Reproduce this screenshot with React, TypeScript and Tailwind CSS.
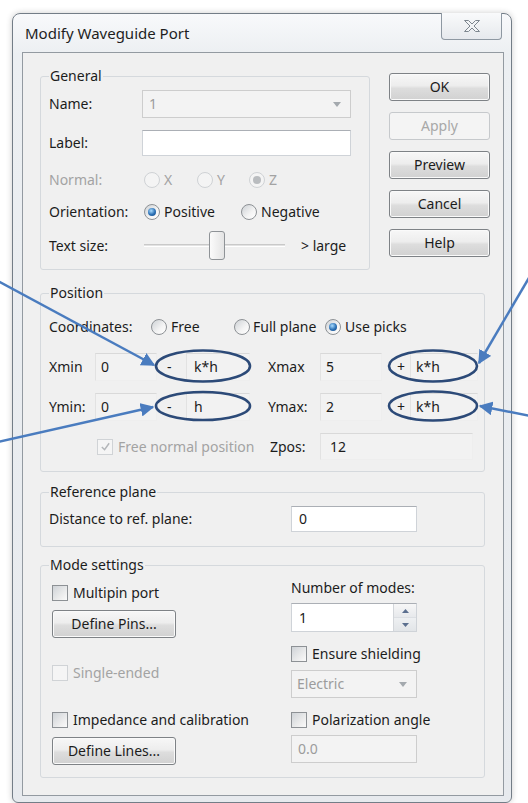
import type { ReactNode } from "react";

type Toggle = { checked?: boolean; disabled?: boolean };

function Radio({ checked, disabled }: Toggle) {
  return (
    <span
      className={`flex h-[16px] w-[16px] shrink-0 items-center justify-center rounded-full border ${
        disabled
          ? "border-[#cfd2d5] bg-[#f4f4f4]"
          : "border-[#8d9195] bg-[linear-gradient(135deg,#cdd1d5,#f4f4f4_60%,#ffffff)]"
      }`}
    >
      {checked && (
        <span
          className={`h-[8px] w-[8px] rounded-full ${
            disabled
              ? "bg-[#b9bcbf]"
              : "bg-[radial-gradient(circle_at_40%_35%,#a9dcff,#2a6fb4_55%,#174a86)]"
          }`}
        />
      )}
    </span>
  );
}

function Check({ checked, disabled }: Toggle) {
  return (
    <span
      className={`flex h-[16px] w-[16px] shrink-0 items-center justify-center border ${
        disabled
          ? "border-[#d0d3d6] bg-[#f5f5f5]"
          : "border-[#8d9195] bg-[linear-gradient(135deg,#cfd3d7,#efefef_70%,#fafafa)]"
      }`}
    >
      {checked && (
        <svg viewBox="0 0 12 12" className="h-[11px] w-[11px]">
          <path d="M2 6.5 L5 9.5 L10 2.5" fill="none" stroke="#b3b6b9" strokeWidth="1.6" />
        </svg>
      )}
    </span>
  );
}

function Button({ children, disabled, className = "" }: { children: ReactNode; disabled?: boolean; className?: string }) {
  return (
    <button
      type="button"
      className={`flex h-[28px] items-center justify-center rounded-[3px] border ${
        disabled
          ? "border-[#c6c9cc] bg-[#f4f4f4] text-[#a8a8a8]"
          : "border-[#7e8286] bg-[linear-gradient(#f7f7f7,#ededed_45%,#dddddd_55%,#d1d1d1)] text-[#1c1c1c] shadow-[inset_0_0_0_1px_#fafafa]"
      } ${className}`}
    >
      {children}
    </button>
  );
}

const fieldKinds = {
  edit: "border-[#cfd3d8] border-t-[#abafb5] bg-white text-[#1c1c1c]",
  flat: "border-[#eeeeee] border-t-[#d9d9d9] border-l-[#e2e2e2] bg-[#f2f2f2] text-[#1c1c1c]",
  off: "border-[#cdcdcd] bg-[#f3f3f3] text-[#9c9c9c]",
};

function Field({
  value = "",
  kind = "edit",
  className = "",
  children,
}: {
  value?: string;
  kind?: keyof typeof fieldKinds;
  className?: string;
  children?: ReactNode;
}) {
  return (
    <div className={`flex items-center justify-between border ${fieldKinds[kind]} ${className}`}>
      <span>{value}</span>
      {children}
    </div>
  );
}

const DropArrow = () => (
  <svg viewBox="0 0 8 5" className="mr-[9px] h-[5px] w-[8px]">
    <path d="M0 0 H8 L4 5 Z" fill="#a4a9ae" />
  </svg>
);

function Group({ title, className = "", children }: { title: string; className?: string; children: ReactNode }) {
  return (
    <fieldset className={`rounded-[3px] border border-[#d5d9dd] ${className}`}>
      <legend className="ml-[8px] px-[1px] leading-[16px] text-[#1c1c1c]">{title}</legend>
      {children}
    </fieldset>
  );
}

function Labeled({ children, disabled }: { children: ReactNode; disabled?: boolean }) {
  return <span className={disabled ? "text-[#a3a3a3]" : "text-[#1c1c1c]"}>{children}</span>;
}

// one "Xmin ... - k*h   Xmax ... + k*h" line of the Position box
function RangeRow({ lo, loVal, loExtra, hi, hiVal, hiExtra }: { lo: string; loVal: string; loExtra: string; hi: string; hiVal: string; hiExtra: string }) {
  return (
    <div className="flex h-[28px] items-center">
      <span className="w-[46px]">{lo}</span>
      <Field kind="flat" value={loVal} className="h-[28px] w-[62px] pl-[5px]" />
      <span className="w-[29px] pl-[10px]">-</span>
      <Field kind="flat" value={loExtra} className="h-[28px] w-[64px] pl-[7px]" />
      <span className="ml-[18px] w-[52px]">{hi}</span>
      <Field kind="flat" value={hiVal} className="h-[28px] w-[62px] pl-[5px]" />
      <span className="w-[28px] pl-[15px]">+</span>
      <Field kind="flat" value={hiExtra} className="h-[28px] w-[68px] pl-[5px]" />
    </div>
  );
}

function Annotations() {
  const blue = "#4a7cbf";
  const navy = "#2c4a78";
  return (
    <svg className="pointer-events-none absolute left-0 top-0" width="528" height="803" viewBox="0 0 528 803">
      <defs>
        <marker id="head" viewBox="0 0 10 10" refX="9" refY="5" markerWidth="5.5" markerHeight="5.5" orient="auto">
          <path d="M0 0 L10 5 L0 10 Z" fill={blue} />
        </marker>
      </defs>
      <g fill="none" stroke={blue} strokeWidth="2.5" markerEnd="url(#head)">
        <line x1="-2" y1="281" x2="154" y2="365" />
        <line x1="-2" y1="442" x2="153" y2="407" />
        <line x1="530" y1="276" x2="479" y2="363" />
        <line x1="530" y1="416" x2="480" y2="406" />
      </g>
      <g fill="none" stroke={navy} strokeWidth="2.6">
        <ellipse cx="203" cy="366" rx="47" ry="15.5" />
        <ellipse cx="433" cy="366" rx="44" ry="15.5" />
        <ellipse cx="203" cy="406" rx="47" ry="14" />
        <ellipse cx="433" cy="406" rx="44" ry="14.5" />
      </g>
    </svg>
  );
}

export default function App() {
  return (
    <div className="relative h-[803px] w-[528px] overflow-hidden bg-white font-['Noto_Sans',sans-serif] text-[14px] leading-[18px] text-[#1c1c1c]">
      {/* window frame */}
      <div className="ml-[12px] mt-[13px] flex h-[790px] w-[500px] flex-col rounded-t-[8px] rounded-b-[6px] border border-[#737d87] bg-[linear-gradient(180deg,#f8f9fb,#eceff2_40px,#e7eaee)] pb-[6px] pl-[9px] pr-[7px] shadow-[0_0_6px_rgba(0,0,0,0.2)]">
        <div className="flex h-[38px] shrink-0 items-start justify-between">
          <span className="mt-[10px] pl-[3px] text-[15px] text-[#1e1e1e]">Modify Waveguide Port</span>
          <div className="-mt-[1px] mr-[2px] flex h-[27px] w-[61px] items-center justify-center rounded-b-[4px] border border-t-0 border-[#8e98a2] bg-[linear-gradient(#f9fafb,#e6e9ed)]">
            <svg viewBox="0 0 18 14" className="h-[14px] w-[18px]">
              <path
                d="M1.5 1.5 H5.5 L9 5 L12.5 1.5 H16.5 L11 7 L16.5 12.5 H12.5 L9 9 L5.5 12.5 H1.5 L7 7 Z"
                fill="#f2f4f6"
                stroke="#7d868f"
                strokeWidth="1"
                strokeLinejoin="round"
              />
            </svg>
          </div>
        </div>

        {/* client area */}
        <div className="flex flex-1 flex-col border border-[#939aa1] bg-[#f0f0f0] pl-[17px] pt-[15px]">
          <div className="flex">
            <Group title="General" className="h-[202px] w-[330px]">
              <div className="flex flex-col pl-[8px]">
                <div className="mt-[6px] flex h-[28px] items-center">
                  <span className="w-[93px]">Name:</span>
                  <Field kind="off" value="1" className="h-[28px] w-[209px] pl-[6px] text-[#8e8e8e]">
                    <DropArrow />
                  </Field>
                </div>
                <div className="mt-[12px] flex h-[26px] items-center">
                  <span className="w-[93px]">Label:</span>
                  <Field kind="edit" className="h-[26px] w-[209px]" />
                </div>
                <div className="mt-[12px] flex h-[24px] items-center text-[#a3a3a3]">
                  <span className="w-[95px]">Normal:</span>
                  <div className="flex w-[53px] items-center gap-[4px]">
                    <Radio disabled />
                    <span>X</span>
                  </div>
                  <div className="flex w-[52px] items-center gap-[4px]">
                    <Radio disabled />
                    <span>Y</span>
                  </div>
                  <div className="flex items-center gap-[4px]">
                    <Radio checked disabled />
                    <span>Z</span>
                  </div>
                </div>
                <div className="mt-[8px] flex h-[24px] items-center">
                  <span className="w-[95px]">Orientation:</span>
                  <div className="flex w-[97px] items-center gap-[4px]">
                    <Radio checked />
                    <span>Positive</span>
                  </div>
                  <div className="flex items-center gap-[4px]">
                    <Radio />
                    <span>Negative</span>
                  </div>
                </div>
                <div className="mt-[7px] flex h-[29px] items-center">
                  <span className="w-[95px]">Text size:</span>
                  <div className="flex w-[141px] items-center">
                    <div className="h-[3px] w-[65px] border-y border-t-[#c9c9c9] border-b-white bg-[#e2e2e2]" />
                    <div className="h-[29px] w-[16px] rounded-[3px] border border-[#8f9397] bg-[linear-gradient(90deg,#fbfbfb,#e4e4e4)]" />
                    <div className="h-[3px] flex-1 border-y border-t-[#c9c9c9] border-b-white bg-[#e2e2e2]" />
                  </div>
                  <span className="ml-[16px]">&gt; large</span>
                </div>
              </div>
            </Group>

            <div className="ml-[19px] mt-[5px] flex w-[101px] flex-col gap-[11px]">
              <Button className="shadow-[inset_0_0_0_1px_#e9eef3]">OK</Button>
              <Button disabled>Apply</Button>
              <Button>Preview</Button>
              <Button>Cancel</Button>
              <Button>Help</Button>
            </div>
          </div>

          <Group title="Position" className="mt-[15px] h-[187px] w-[445px]">
            <div className="flex flex-col pl-[8px]">
              <div className="mt-[14px] flex h-[24px] items-center">
                <span className="w-[102px]">Coordinates:</span>
                <div className="flex w-[83px] items-center gap-[4px]">
                  <Radio />
                  <span>Free</span>
                </div>
                <div className="flex w-[91px] items-center gap-[3px]">
                  <Radio />
                  <span>Full plane</span>
                </div>
                <div className="flex items-center gap-[4px]">
                  <Radio checked />
                  <span>Use picks</span>
                </div>
              </div>
              <div className="mt-[14px]">
                <RangeRow lo="Xmin" loVal="0" loExtra="k*h" hi="Xmax" hiVal="5" hiExtra="k*h" />
              </div>
              <div className="mt-[12px]">
                <RangeRow lo="Ymin:" loVal="0" loExtra="h" hi="Ymax:" hiVal="2" hiExtra="k*h" />
              </div>
              <div className="-ml-[8px] mt-[12px] flex h-[27px] items-center">
                <div className="flex w-[229px] items-center gap-[5px] pl-[56px]">
                  <Check checked disabled />
                  <Labeled disabled>Free normal position</Labeled>
                </div>
                <span className="w-[50px]">Zpos:</span>
                <Field kind="flat" value="12" className="h-[27px] w-[153px] pl-[9px]" />
              </div>
            </div>
          </Group>

          <Group title="Reference plane" className="mt-[12px] h-[63px] w-[445px]">
            <div className="mt-[6px] flex h-[26px] items-center pl-[8px]">
              <span className="w-[242px]">Distance to ref. plane:</span>
              <Field kind="edit" value="0" className="h-[26px] w-[126px] pl-[7px]" />
            </div>
          </Group>

          <Group title="Mode settings" className="mt-[10px] h-[221px] w-[445px]">
            <div className="flex pl-[11px]">
              <div className="flex w-[239px] flex-col items-start">
                <div className="mt-[11px] flex h-[17px] items-center gap-[5px]">
                  <Check />
                  <Labeled>Multipin port</Labeled>
                </div>
                <Button className="mt-[9px] w-[124px]">Define Pins...</Button>
                <div className="mt-[26px] flex h-[17px] items-center gap-[5px]">
                  <Check disabled />
                  <Labeled disabled>Single-ended</Labeled>
                </div>
                <div className="mt-[30px] flex h-[17px] items-center gap-[5px]">
                  <Check />
                  <Labeled>Impedance and calibration</Labeled>
                </div>
                <Button className="mt-[9px] w-[124px]">Define Lines...</Button>
              </div>
              <div className="flex flex-col items-start">
                <span className="mt-[6px]">Number of modes:</span>
                <Field kind="edit" value="1" className="mt-[6px] h-[29px] w-[126px] pl-[7px]">
                  <div className="flex h-full w-[23px] flex-col border-l border-[#d3d6da]">
                    <div className="flex flex-1 items-center justify-center border-b border-[#dcdfe3] bg-[linear-gradient(#f7f7f7,#e7e9ec)]">
                      <svg viewBox="0 0 7 4" className="h-[4px] w-[7px]">
                        <path d="M0 4 L3.5 0 L7 4 Z" fill="#5b6f8f" />
                      </svg>
                    </div>
                    <div className="flex flex-1 items-center justify-center bg-[linear-gradient(#eef0f2,#e2e5e8)]">
                      <svg viewBox="0 0 7 4" className="h-[4px] w-[7px]">
                        <path d="M0 0 H7 L3.5 4 Z" fill="#5b6f8f" />
                      </svg>
                    </div>
                  </div>
                </Field>
                <div className="mt-[13px] flex h-[17px] items-center gap-[5px]">
                  <Check />
                  <Labeled>Ensure shielding</Labeled>
                </div>
                <Field kind="off" value="Electric" className="mt-[8px] h-[28px] w-[126px] pl-[5px]">
                  <DropArrow />
                </Field>
                <div className="mt-[13px] flex h-[17px] items-center gap-[5px]">
                  <Check />
                  <Labeled>Polarization angle</Labeled>
                </div>
                <Field kind="off" value="0.0" className="mt-[7px] h-[28px] w-[126px] pl-[6px]" />
              </div>
            </div>
          </Group>
        </div>
      </div>

      <Annotations />
    </div>
  );
}
